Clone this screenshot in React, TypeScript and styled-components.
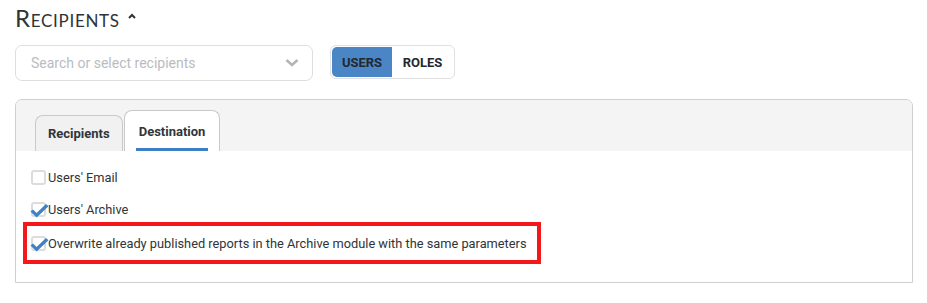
import React from "react";
import styled, { createGlobalStyle } from "styled-components";

const GlobalStyle = createGlobalStyle`
  body {
    margin: 0;
    background: #ffffff;
    font-family: Roboto, "Liberation Sans", sans-serif;
    color: #2f3438;
  }
`;

const options = [
  { label: "Users' Email", checked: false, highlight: false },
  { label: "Users' Archive", checked: true, highlight: false },
  {
    label: "Overwrite already published reports in the Archive module with the same parameters",
    checked: true,
    highlight: true,
  },
];

const CheckIcon = () => (
  <svg width="19" height="15" viewBox="0 0 19 15">
    <path d="M0.5 8.6 L3 6.6 L6.6 10 L16 1 L18.5 3.2 L6.6 14.5 Z" fill="#3f80c6" />
  </svg>
);

const App = () => {
  return (
    <Root>
      <GlobalStyle />
      <Title>
        Recipients
        <svg width="8" height="6" viewBox="0 0 8 6">
          <path d="M1 5 L4 2 L7 5" stroke="#2e3338" strokeWidth="2" fill="none" />
        </svg>
      </Title>
      <Controls>
        <Search>
          <Placeholder>Search or select recipients</Placeholder>
          <svg width="14" height="10" viewBox="0 0 14 10">
            <path d="M1.5 2 L7 7 L12.5 2" stroke="#b5b5b5" strokeWidth="2.6" fill="none" />
          </svg>
        </Search>
        <Toggle>
          <ToggleButton active>USERS</ToggleButton>
          <ToggleButton>ROLES</ToggleButton>
        </Toggle>
      </Controls>
      <Panel>
        <TabBar>
          <Tab>Recipients</Tab>
          <Tab active>
            <TabLabel>Destination</TabLabel>
          </Tab>
        </TabBar>
        <Body>
          {options.map((item) => (
            <Option key={item.label} highlight={item.highlight}>
              <Box>{item.checked && <Check><CheckIcon /></Check>}</Box>
              <span>{item.label}</span>
            </Option>
          ))}
        </Body>
      </Panel>
    </Root>
  );
};

export default App;

const Root = styled.div`
  display: flex;
  flex-direction: column;
  padding: 3px 14px 0 15px;
  width: 898px;
`;

const Title = styled.h2`
  margin: 0;
  height: 28px;
  display: flex;
  align-items: center;
  gap: 8px;
  font-family: Lato, "Open Sans", sans-serif;
  font-weight: 400;
  font-variant: small-caps;
  font-size: 24px;
  letter-spacing: 0.7px;
  color: #2e3338;

  svg {
    margin-top: -2px;
  }
`;

const Controls = styled.div`
  display: flex;
  align-items: flex-start;
  gap: 17px;
  margin-top: 14px;
`;

const Search = styled.div`
  box-sizing: border-box;
  width: 298px;
  height: 36px;
  border: 1px solid #dedede;
  border-radius: 7px;
  display: flex;
  align-items: center;
  justify-content: space-between;
  padding: 0 13px 0 15px;
`;

const Placeholder = styled.span`
  font-size: 14px;
  color: #b9bcc0;
`;

const Toggle = styled.div`
  display: flex;
  border: 1px solid #e0e0e0;
  border-radius: 6px;
  padding: 1px;
  height: 34px;
  box-sizing: border-box;
  overflow: hidden;
`;

const ToggleButton = styled.div<{ active?: boolean }>`
  width: ${(p) => (p.active ? "60px" : "61px")};
  display: flex;
  align-items: center;
  justify-content: center;
  font-size: 13px;
  font-weight: 700;
  color: #23282d;
  background: ${(p) => (p.active ? "#4a86c6" : "#ffffff")};
  border-radius: ${(p) => (p.active ? "5px 0 0 5px" : "0 5px 5px 0")};
`;

const Panel = styled.div`
  margin-top: 18px;
  border: 1px solid #cfcfcf;
  border-radius: 7px 7px 0 0;
  height: 184px;
  box-sizing: border-box;
  overflow: hidden;
`;

const TabBar = styled.div`
  display: flex;
  align-items: flex-end;
  gap: 1px;
  height: 51px;
  padding-left: 19px;
  background: #f4f4f4;
`;

const Tab = styled.div<{ active?: boolean }>`
  box-sizing: border-box;
  height: ${(p) => (p.active ? "41px" : "36px")};
  padding: 0 ${(p) => (p.active ? "11px" : "12px")};
  display: flex;
  align-items: center;
  font-size: 13px;
  font-weight: 700;
  color: #30353a;
  background: ${(p) => (p.active ? "#ffffff" : "#f1f1f1")};
  border: 1px solid #c9c9c9;
  border-bottom: none;
  border-radius: 8px 8px 0 0;
`;

const TabLabel = styled.span`
  display: flex;
  align-items: center;
  height: 100%;
  padding: 0 3px;
  box-sizing: border-box;
  border-bottom: 3px solid #3e7fc4;
  padding-top: 3px;
`;

const Body = styled.div`
  display: flex;
  flex-direction: column;
  padding: 18px 0 0 7px;
`;

const Option = styled.label<{ highlight?: boolean }>`
  align-self: flex-start;
  display: flex;
  align-items: center;
  height: ${(p) => (p.highlight ? "34px" : "16px")};
  margin-bottom: 16px;
  padding: 0 ${(p) => (p.highlight ? "10px" : "0")} 0 ${(p) => (p.highlight ? "4px" : "8px")};
  margin-top: ${(p) => (p.highlight ? "-11px" : "0")};
  border: ${(p) => (p.highlight ? "4px solid #f5181a" : "none")};
  font-size: 12.8px;
  color: #2f3438;
`;

const Box = styled.span`
  position: relative;
  box-sizing: border-box;
  width: 15px;
  height: 15px;
  border: 2px solid #dcdcdc;
  border-radius: 3px;
  margin-right: 2px;
  flex-shrink: 0;
`;

const Check = styled.span`
  position: absolute;
  left: -3px;
  top: -1px;
  display: flex;
`;
